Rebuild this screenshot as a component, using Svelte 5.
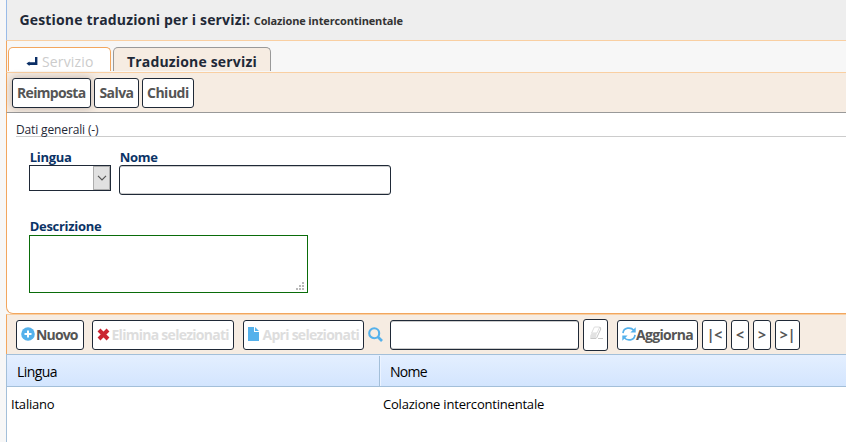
<script>
  const pager = [
    { label: '|<', width: 25 },
    { label: '<', width: 18 },
    { label: '>', width: 18 },
    { label: '>|', width: 25 }
  ];
</script>

<div class="page">
  <header><span class="title">Gestione traduzioni per i servizi:</span><span class="sub">Colazione intercontinentale</span></header>
  <nav>
    <div class="tab back">
      <svg width="12" height="10" viewBox="0 0 12 10"><path d="M9 0h2.4v8H3.5v1L.4 6.5l3.1-2v.8H9z" fill="#0b2f66" /></svg>
      <span>Servizio</span>
    </div>
    <div class="tab current"><span>Traduzione servizi</span></div>
  </nav>
  <div class="actions">
    <button class="focus" style="width:79px"><span class="t1">Reimposta</span></button>
    <button style="width:45px"><span class="t2">Salva</span></button>
    <button style="width:52px"><span class="t3">Chiudi</span></button>
  </div>
  <section>
    <div class="legend"><span>Dati generali (-)</span></div>
    <div class="fields">
      <div class="field lang">
        <label for="lang"><span class="l1">Lingua</span></label>
        <div class="select" id="lang">
          <div class="arrow"><svg width="10" height="6" viewBox="0 0 10 6"><path d="M1 .8 5 4.8 9 .8" fill="none" stroke="#555" stroke-width="1.2" /></svg></div>
        </div>
      </div>
      <div class="field">
        <label for="name"><span class="l2">Nome</span></label>
        <input id="name" class="name" />
      </div>
    </div>
    <div class="field descr">
      <label for="descr"><span class="l3">Descrizione</span></label>
      <div class="area" id="descr">
        <svg width="8" height="8" viewBox="0 0 8 8" fill="#b9b9b9"><path d="M6 0h2v2H6zM3 3h2v2H3zM6 3h2v2H6zM0 6h2v2H0zM3 6h2v2H3zM6 6h2v2H6z" /></svg>
      </div>
    </div>
  </section>
  <div class="gridbar">
    <button style="width:68px">
      <svg class="up" width="14" height="14" viewBox="0 0 14 14"><circle cx="7" cy="7" r="6.8" fill="#55b1eb" /><path d="M7 3.5v7M3.5 7h7" stroke="#fff" stroke-width="2" /></svg>
      <span class="b1">Nuovo</span>
    </button>
    <button class="off" style="width:142px;margin-left:8px">
      <svg class="up" width="13" height="13" viewBox="0 0 13 13"><path d="m2 2 9 9M11 2l-9 9" stroke="#cb2431" stroke-width="4" /></svg>
      <span class="b2">Elimina selezionati</span>
    </button>
    <button class="off" style="width:121px;margin-left:9px">
      <svg class="up" width="11" height="14" viewBox="0 0 11 14" fill="#55b1eb"><path d="M0 0h6v5h5v9H0zM7 0l4 4H7z" /></svg>
      <span class="b3">Apri selezionati</span>
    </button>
    <svg class="search" width="15" height="15" viewBox="0 0 15 15" fill="none" stroke="#55b1eb"><circle cx="6.2" cy="6.2" r="5" stroke-width="2.1" /><path d="m10 10 4 4" stroke-width="2.6" /></svg>
    <input class="query" aria-label="Cerca" />
    <button class="erase" aria-label="Pulisci">
      <svg width="15" height="14" viewBox="0 0 15 14"><path d="M5.4 1h5.4L8 7H2.6z" fill="#fff" stroke="#ddd" /><path d="M2.6 7H8l-1.4 5.5H1.2V9.8z" fill="#e2e2e2" /><path d="m11 1 .8 2-4.4 9.4M1.5 12.5H7M9 12.5h5" fill="none" stroke="#c8c8c8" /></svg>
    </button>
    <button style="width:81px;margin-left:9px">
      <svg class="up" width="14" height="14" viewBox="0 0 14 14" fill="none" stroke="#55b1eb" stroke-width="1.7"><path d="M1 6.2C1.6 0 9 0 11.7 3.2M13 7.8C12.4 14 5 14 2.3 10.8" /><path d="M13.7.2v5.3H8.4zM.3 13.8V8.5h5.3z" fill="#55b1eb" stroke="none" /></svg>
      <span class="b4">Aggiorna</span>
    </button>
    {#each pager as p}
      <button class="page-btn" style="width:{p.width}px"><span>{p.label}</span></button>
    {/each}
  </div>
  <div class="columns"><div class="col first"><span>Lingua</span></div><div class="col second"><span>Nome</span></div></div>
  <div class="row"><div class="c1"><span>Italiano</span></div><div><span class="v2">Colazione intercontinentale</span></div></div>
</div>

<style>
  :global(body) { background: #f7f7f7; }
  * { box-sizing: border-box; }
  .page { height: 442px; margin-left: 6px; display: flex; flex-direction: column; overflow: hidden; font-family: 'Open Sans', 'Noto Sans', sans-serif; font-size: 13px; color: #1f2937; }
  span { white-space: nowrap; }
  svg { flex: none; display: block; }
  header { height: 41px; flex: none; background: #eee; border-left: 1px solid #99bbe8; border-bottom: 1px solid #f9cfa2; display: flex; align-items: baseline; padding: 10px 0 0 12.5px; line-height: 20px; font-weight: 700; }
  .title { font-size: 14px; letter-spacing: .16px; }
  .sub { font-size: 11px; margin-left: 3.6px; color: #333; letter-spacing: -.14px; }
  nav { height: 32px; flex: none; border-left: 1px solid #f2a65e; border-bottom: 1px solid #f9cfa2; padding: 6px 0 0 1px; display: flex; gap: 2px; }
  .tab { height: 24px; border: 1px solid #999; border-bottom: 0; border-radius: 5px 5px 0 0; display: flex; font-size: 14px; line-height: 20px; padding-top: 4px; }
  .back { width: 103px; background: #fff; border-color: #f2a65e; color: #ccc; padding-left: 17px; gap: 4px; letter-spacing: .15px; }
  .back svg { margin-top: 5px; }
  .current { width: 158px; background: #f6ece2; font-weight: 700; padding-left: 13px; letter-spacing: .17px; }
  .actions { height: 40px; flex: none; background: #f6ece2; border-left: 1px solid #f2a65e; border-bottom: 1px solid #999; display: flex; gap: 3px; padding: 5px 0 0 5px; }
  button { height: 30px; flex: none; border: 1px solid #1f2937; border-radius: 3px; background: #fff; color: #555; font: 700 14px/20px 'Open Sans', 'Noto Sans', sans-serif; letter-spacing: -.5px; padding: 0 0 0 4px; display: flex; align-items: center; gap: 1px; }
  .focus { box-shadow: 0 0 8px rgba(60, 40, 40, .3); }
  .t1 { letter-spacing: -.68px; }
  .t2 { margin-left: .5px; letter-spacing: -.6px; }
  .b1 { letter-spacing: -.85px; }
  .b2 { margin-left: .5px; letter-spacing: -.73px; }
  .b3 { margin-left: 2.5px; letter-spacing: -.73px; }
  .b4 { margin-left: -1px; letter-spacing: -.68px; }
  .up { margin-top: -2px; }
  section { height: 201px; flex: none; background: #fff; border-left: 1px solid #f2a65e; border-bottom: 1px solid #f2a65e; border-radius: 0 0 0 7px; padding: 7px 0 0 9px; }
  .legend { height: 17px; border-bottom: 1px solid #ccc; font-size: 12px; line-height: 20px; letter-spacing: -.14px; }
  .fields { display: flex; gap: 8px; padding: 11px 0 0 13px; }
  label { display: block; height: 17px; line-height: 18px; font-size: 13px; font-weight: 700; color: #0b3366; padding-left: .7px; letter-spacing: -.3px; }
  .select { width: 82px; height: 26px; border: 1px solid #1f2937; background: #fff; display: flex; justify-content: flex-end; }
  .arrow { width: 17px; background: #e1e1e1; border: 1px solid #adadad; display: flex; align-items: center; justify-content: center; }
  input { display: block; height: 30px; border: 1px solid #1f2937; border-radius: 3px; background: #fff; box-shadow: inset 0 1px #ccc, inset 0 -1px #ccc; padding: 0 5px; outline: 0; }
  .name { width: 272px; }
  .descr { padding: 23px 0 0 13px; }
  .descr label { line-height: 16px; }
  .area { width: 279px; height: 58px; border: 1px solid #0a6c0a; background: #fff; display: flex; align-items: flex-end; justify-content: flex-end; padding: 0 3px 2px 0; }
  .gridbar { height: 40px; flex: none; background: #f6ece2; border-left: 1px solid #f2a65e; border-top: 1px solid #f9cfa2; display: flex; padding: 5px 0 0 9px; }
  .off { color: #ddd; }
  .search { margin: 7px 7px 0 4px; }
  .query { width: 189px; margin-right: 4px; }
  .erase { width: 25px; height: 32px; margin-top: -1px; padding: 0 0 4px 5px; }
  .page-btn { margin-left: 4px; padding: 0; justify-content: center; font-size: 14px; letter-spacing: -.2px; }
  .columns { height: 33px; flex: none; border: 1px solid #a3bfd9; border-right: 0; background: linear-gradient(#e4efff, #d3e5fe); display: flex; font-size: 14px; line-height: 20px; color: #000; letter-spacing: -.55px; }
  .col { padding: 7px 0 0 10px; }
  .first { width: 373px; margin-top: 1px; padding-top: 6px; border-right: 1px solid #a3bfd9; }
  .second { box-shadow: inset 1px 0 #ebf3ff; letter-spacing: -.7px; }
  .row { flex: 1; background: #fff; border-left: 1px solid #a3bfd9; display: flex; padding: 7px 0 0 4px; line-height: 20px; font-size: 13px; color: #000; letter-spacing: -.2px; }
  .c1 { width: 372px; }
</style>
